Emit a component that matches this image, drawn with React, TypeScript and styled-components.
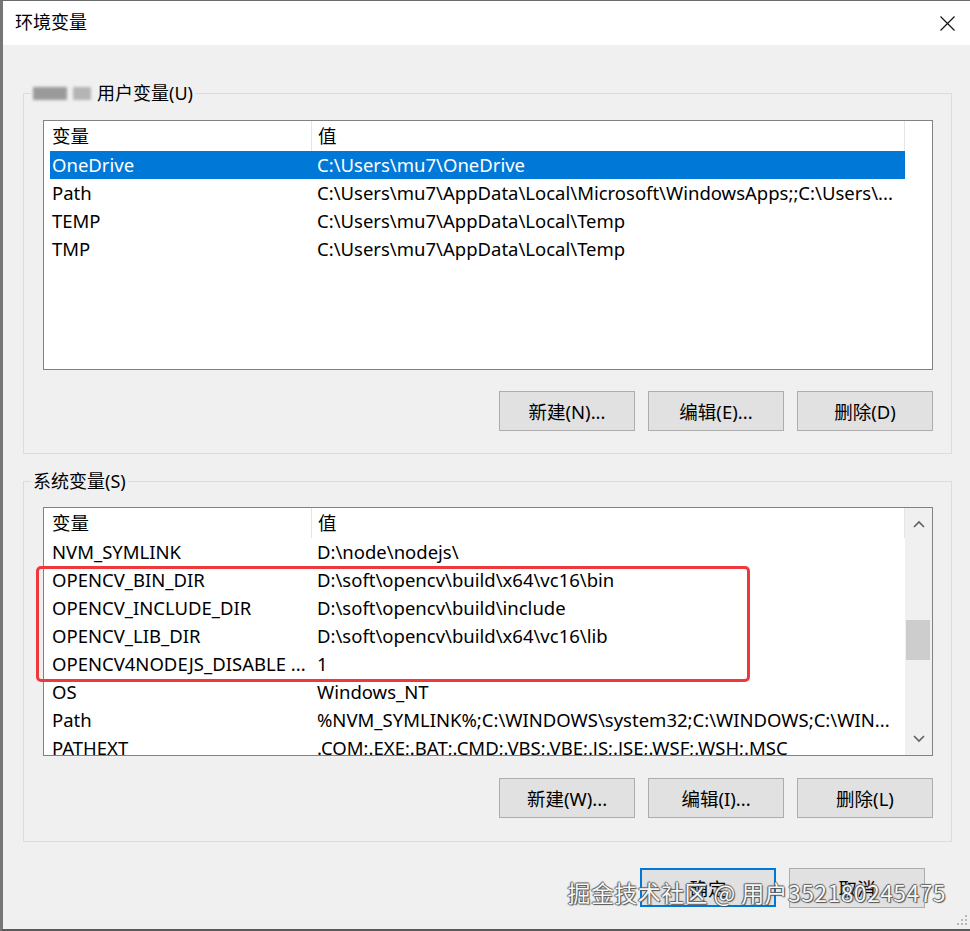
import React from 'react'
import styled, { createGlobalStyle } from 'styled-components'

const GlobalStyle = createGlobalStyle`
  html, body {
    margin: 0;
    padding: 0;
    background: #2e2e2e;
  }
  body {
    font-family: "Noto Sans", "Noto Sans CJK SC", sans-serif;
    color: #000;
  }
  * {
    box-sizing: border-box;
  }
`

type EnvVar = [string, string]

const userVars: EnvVar[] = [
  ['OneDrive', 'C:\\Users\\mu7\\OneDrive'],
  ['Path', 'C:\\Users\\mu7\\AppData\\Local\\Microsoft\\WindowsApps;;C:\\Users\\...'],
  ['TEMP', 'C:\\Users\\mu7\\AppData\\Local\\Temp'],
  ['TMP', 'C:\\Users\\mu7\\AppData\\Local\\Temp'],
]

const systemVars: EnvVar[] = [
  ['NVM_SYMLINK', 'D:\\node\\nodejs\\'],
  ['OPENCV_BIN_DIR', 'D:\\soft\\opencv\\build\\x64\\vc16\\bin'],
  ['OPENCV_INCLUDE_DIR', 'D:\\soft\\opencv\\build\\include'],
  ['OPENCV_LIB_DIR', 'D:\\soft\\opencv\\build\\x64\\vc16\\lib'],
  ['OPENCV4NODEJS_DISABLE ...', '1'],
  ['OS', 'Windows_NT'],
  ['Path', '%NVM_SYMLINK%;C:\\WINDOWS\\system32;C:\\WINDOWS;C:\\WIN...'],
  ['PATHEXT', '.COM;.EXE;.BAT;.CMD;.VBS;.VBE;.JS;.JSE;.WSF;.WSH;.MSC'],
]

const Window = styled.div`
  position: relative;
  width: 970px;
  height: 931px;
  display: flex;
  flex-direction: column;
  border-top: 1px solid #6b6b6b;
  border-left: 3px solid #767676;
  border-bottom: 2px solid #5a5a5a;
  background: #f0f0f0;
  overflow: hidden;
`

const TitleBar = styled.div`
  height: 44px;
  flex: none;
  display: flex;
  align-items: center;
  justify-content: space-between;
  padding: 0 15px 0 12px;
  background: #fff;
`

const Title = styled.span`
  font-size: 18px;
  line-height: 24px;
  margin-top: -2px;
`

const Body = styled.div`
  flex: none;
  padding: 37px 18px 0 20px;
`

const Group = styled.fieldset<{ $gap?: number }>`
  margin: ${p => p.$gap ?? 0}px 0 0 0;
  padding: 0;
  border: 1px solid #dcdcdc;
  min-width: 0;
`

const GroupLabel = styled.legend`
  margin-left: 7px;
  padding: 0 2px;
  font-size: 18px;
  line-height: 22px;
  display: flex;
  align-items: center;
`

const Smudge = styled.span<{ $w: number; $shade: string }>`
  display: inline-block;
  width: ${p => p.$w}px;
  height: 13px;
  margin-right: 6px;
  background: ${p => p.$shade};
  filter: blur(1.6px);
`

const GroupContent = styled.div<{ $top: number; $bottom: number }>`
  padding: ${p => p.$top}px 18px ${p => p.$bottom}px 19px;
`

const ListBox = styled.div<{ $height: number }>`
  position: relative;
  height: ${p => p.$height}px;
  border: 1px solid #828282;
  background: #fff;
  display: flex;
`

const Viewport = styled.div`
  flex: 1;
  padding-left: 6px;
  overflow: hidden;
  font-size: 18.5px;
`

const Row = styled.div<{ $header?: boolean; $selected?: boolean }>`
  display: grid;
  grid-template-columns: 261px 1fr;
  height: ${p => (p.$header ? 30 : 28)}px;
  line-height: ${p => (p.$header ? 30 : 28)}px;
  background: ${p => (p.$selected ? '#0078d7' : 'transparent')};
  color: ${p => (p.$selected ? '#fff' : '#000')};
  border-right: ${p => (p.$header ? '1px solid #e5e5e5' : 'none')};
`

const Cell = styled.div<{ $value?: boolean; $header?: boolean }>`
  padding-left: ${p => (p.$value ? 6 : 2)}px;
  white-space: nowrap;
  overflow: hidden;
  border-left: ${p => (p.$value && p.$header ? '1px solid #e5e5e5' : 'none')};
`

const ScrollSlot = styled.div<{ $track?: boolean }>`
  width: 27px;
  flex: none;
  display: flex;
  flex-direction: column;
  align-items: center;
  background: ${p => (p.$track ? '#f0f0f0' : '#fff')};
`

const ArrowButton = styled.div`
  height: 32px;
  width: 100%;
  display: flex;
  align-items: center;
  justify-content: center;
  flex: none;
`

const Track = styled.div`
  flex: 1;
  width: 100%;
  padding: 0 2px 0 1px;
`

const Thumb = styled.div<{ $offset: number }>`
  margin-top: ${p => p.$offset}px;
  height: 40px;
  background: #cdcdcd;
`

const Marker = styled.div`
  position: absolute;
  left: -8px;
  top: 58px;
  width: 714px;
  height: 116px;
  border: 3.5px solid #ef383b;
  border-radius: 5px;
  pointer-events: none;
`

const ButtonRow = styled.div<{ $top: number }>`
  display: flex;
  justify-content: flex-end;
  gap: 13px;
  margin-top: ${p => p.$top}px;
`

const Button = styled.button<{ $primary?: boolean }>`
  width: 136px;
  height: ${p => (p.$primary ? 39 : 40)}px;
  padding: 0;
  background: #e1e1e1;
  border: ${p => (p.$primary ? '2px solid #0078d7' : '1px solid #adadad')};
  font-family: "Noto Sans", "Noto Sans CJK SC", sans-serif;
  font-size: 18.5px;
  color: #000;
`

const Footer = styled.div`
  display: flex;
  justify-content: flex-end;
  gap: 13px;
  margin-top: 26px;
  padding-right: 45px;
`

const Watermark = styled.div`
  position: absolute;
  right: 24px;
  bottom: 20px;
  font-family: "Noto Sans CJK SC", sans-serif;
  font-size: 23px;
  letter-spacing: 0.4px;
  color: #f7f7f7;
  text-shadow: 0 0 1px #3a3a3a, 1px 1px 1px #555, -1px 0 1px #666, 0 -1px 1px #666;
  white-space: nowrap;
  pointer-events: none;
`

const Grip = styled.svg`
  position: absolute;
  right: 2px;
  bottom: 2px;
`

const CloseIcon = () => (
  <svg width="15" height="15" viewBox="0 0 15 15">
    <path d="M0.5 0.5 L14.5 14.5 M14.5 0.5 L0.5 14.5" stroke="#111" strokeWidth="1.2" fill="none" />
  </svg>
)

const Chevron = ({ up }: { up?: boolean }) => (
  <svg width="12" height="8" viewBox="0 0 12 8">
    <path
      d={up ? 'M1 7 L6 2 L11 7' : 'M1 1 L6 6 L11 1'}
      stroke="#606060"
      strokeWidth="1.6"
      fill="none"
    />
  </svg>
)

interface VarListProps {
  rows: EnvVar[]
  height: number
  selected?: number
  scroll?: boolean
  children?: React.ReactNode
}

const VarList: React.FC<VarListProps> = ({ rows, height, selected, scroll, children }) => (
  <ListBox $height={height}>
    <Viewport>
      <Row $header>
        <Cell $header>变量</Cell>
        <Cell $header $value>值</Cell>
      </Row>
      {rows.map(([name, value], i) => (
        <Row key={name + i} $selected={i === selected}>
          <Cell>{name}</Cell>
          <Cell $value>{value}</Cell>
        </Row>
      ))}
    </Viewport>
    <ScrollSlot $track={scroll}>
      {scroll && (
        <>
          <ArrowButton><Chevron up /></ArrowButton>
          <Track><Thumb $offset={80} /></Track>
          <ArrowButton><Chevron /></ArrowButton>
        </>
      )}
    </ScrollSlot>
    {children}
  </ListBox>
)

export default function App() {
  return (
    <>
      <GlobalStyle />
      <Window>
        <TitleBar>
          <Title>环境变量</Title>
          <CloseIcon />
        </TitleBar>
        <Body>
          <Group>
            <GroupLabel>
              <Smudge $w={34} $shade="#9a9a9a" />
              <Smudge $w={18} $shade="#b4b4b4" />
              用户变量(U)
            </GroupLabel>
            <GroupContent $top={16} $bottom={22}>
              <VarList rows={userVars} height={250} selected={0} />
              <ButtonRow $top={21}>
                <Button>新建(N)...</Button>
                <Button>编辑(E)...</Button>
                <Button>删除(D)</Button>
              </ButtonRow>
            </GroupContent>
          </Group>
          <Group $gap={16}>
            <GroupLabel>系统变量(S)</GroupLabel>
            <GroupContent $top={15} $bottom={23}>
              <VarList rows={systemVars} height={249} scroll>
                <Marker />
              </VarList>
              <ButtonRow $top={22}>
                <Button>新建(W)...</Button>
                <Button>编辑(I)...</Button>
                <Button>删除(L)</Button>
              </ButtonRow>
            </GroupContent>
          </Group>
        </Body>
        <Footer>
          <Button $primary>确定</Button>
          <Button>取消</Button>
        </Footer>
        <Watermark>掘金技术社区 @ 用户352180245475</Watermark>
        <Grip width="14" height="14" viewBox="0 0 14 14">
          {[[11, 2], [11, 6], [7, 6], [11, 10], [7, 10], [3, 10]].map(([x, y]) => (
            <rect key={`${x}-${y}`} x={x} y={y} width="2" height="2" fill="#b8b8b8" />
          ))}
        </Grip>
      </Window>
    </>
  )
}
